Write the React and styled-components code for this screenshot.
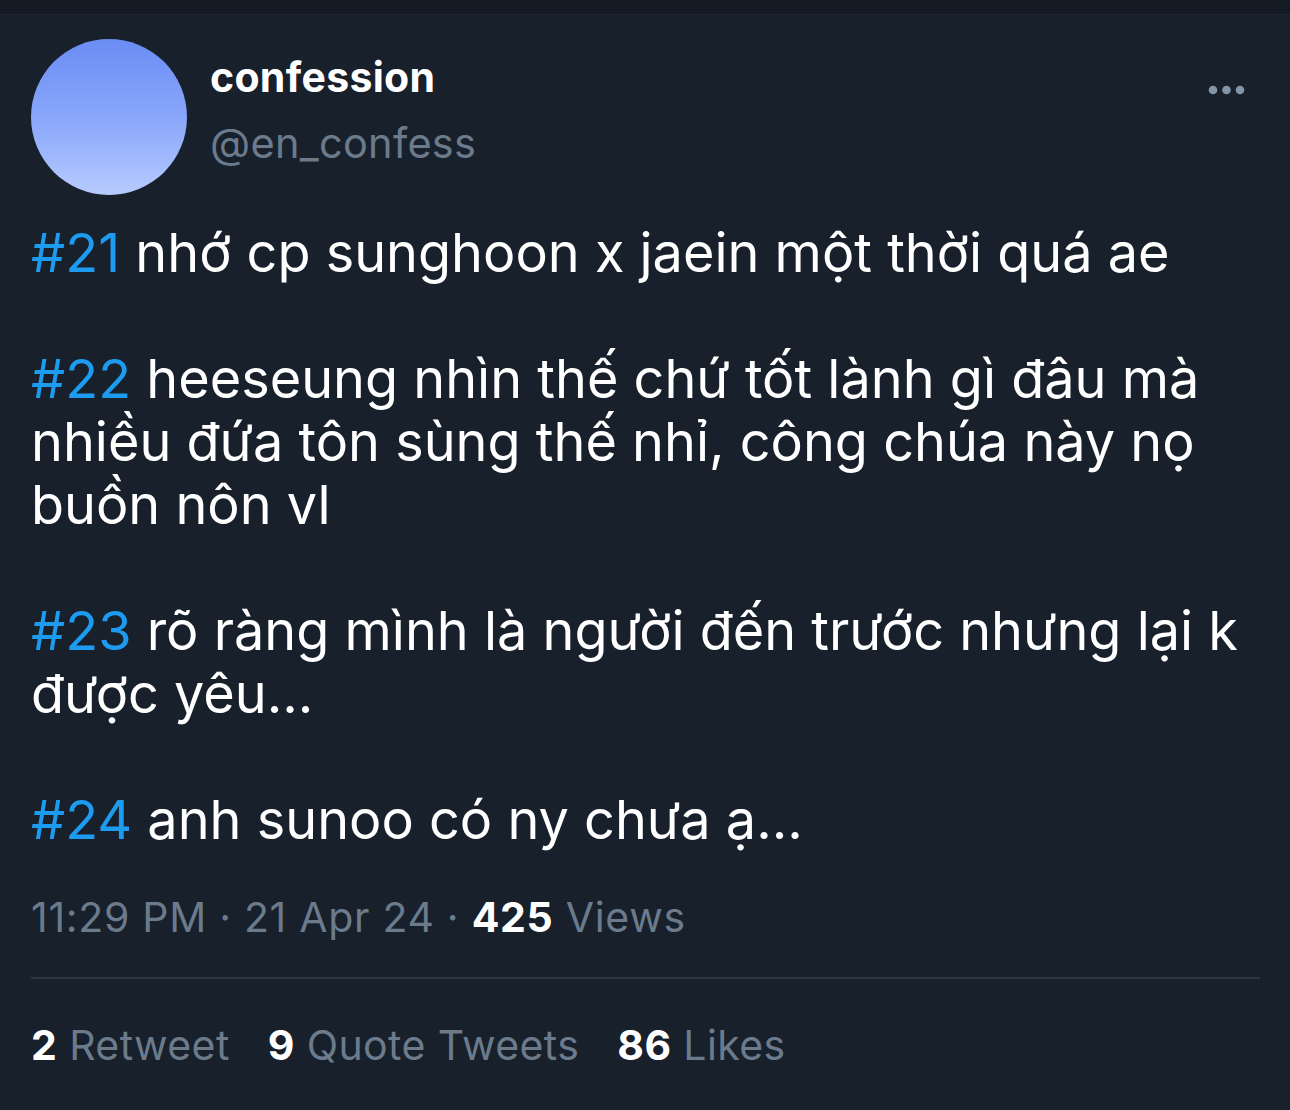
import React from "react";
import styled, { createGlobalStyle } from "styled-components";

const GlobalStyle = createGlobalStyle`
  html, body {
    margin: 0;
    padding: 0;
    background: #17202b;
  }
  body {
    font-family: Inter, "Noto Sans", "Liberation Sans", sans-serif;
    -webkit-font-smoothing: antialiased;
  }
`;

const paragraphs = [
  { tag: "#21", text: "nhớ cp sunghoon x jaein một thời quá ae" },
  { tag: "#22", text: "heeseung nhìn thế chứ tốt lành gì đâu mà nhiều đứa tôn sùng thế nhỉ, công chúa này nọ buồn nôn vl" },
  { tag: "#23", text: "rõ ràng mình là người đến trước nhưng lại k được yêu..." },
  { tag: "#24", text: "anh sunoo có ny chưa ạ..." },
];

const stats = [
  { value: "2", label: "Retweet" },
  { value: "9", label: "Quote Tweets" },
  { value: "86", label: "Likes" },
];

function App() {
  return (
    <>
      <GlobalStyle />
      <Page>
        <TopStrip />
        <Tweet>
          <Header>
            <Avatar />
            <Names>
              <DisplayName>confession</DisplayName>
              <Handle>@en_confess</Handle>
            </Names>
            <MoreButton aria-label="More">
              <svg width="38" height="10" viewBox="0 0 38 10">
                <circle cx="5" cy="5" r="4.3" fill="#8395a8" />
                <circle cx="18.5" cy="5" r="4.3" fill="#8395a8" />
                <circle cx="32" cy="5" r="4.3" fill="#8395a8" />
              </svg>
            </MoreButton>
          </Header>

          <Body>
            {paragraphs.map((p) => (
              <Paragraph key={p.tag}>
                <Hashtag>{p.tag}</Hashtag> {p.text}
              </Paragraph>
            ))}
          </Body>

          <Meta>
            11:29 PM · 21 Apr 24 · <Strong>425</Strong> Views
          </Meta>

          <Divider />

          <Stats>
            {stats.map((s) => (
              <Stat key={s.label}>
                <Strong>{s.value}</Strong> {s.label}
              </Stat>
            ))}
          </Stats>
        </Tweet>
      </Page>
    </>
  );
}

const Page = styled.div`
  width: 1290px;
  height: 1110px;
  background: #17202b;
  overflow: hidden;
`;

const TopStrip = styled.div`
  height: 14px;
  background: #131a23;
  border-bottom: 1px solid #1d2631;
`;

const Tweet = styled.article`
  padding: 24px 31px 0 31px;
`;

const Header = styled.header`
  display: flex;
  align-items: flex-start;
`;

const Avatar = styled.div`
  width: 156px;
  height: 156px;
  border-radius: 50%;
  flex-shrink: 0;
  background: linear-gradient(180deg, #6a8df4 0%, #88a6fa 50%, #b8cbfe 100%);
`;

const Names = styled.div`
  display: flex;
  flex-direction: column;
  margin-left: 23px;
  padding-top: 11px;
  flex: 1;
`;

const DisplayName = styled.div`
  color: #ffffff;
  font-weight: 700;
  font-size: 41px;
  line-height: 54px;
  letter-spacing: 0.3px;
`;

const Handle = styled.div`
  color: #6b7b8c;
  font-size: 41.5px;
  line-height: 54px;
  letter-spacing: 0.3px;
  margin-top: 12px;
`;

const MoreButton = styled.div`
  display: flex;
  align-items: center;
  justify-content: center;
  margin-top: 46px;
  margin-right: 13px;
`;

const Body = styled.div`
  margin-top: 26px;
  color: #ffffff;
  font-size: 54px;
  line-height: 63px;
`;

const Paragraph = styled.p`
  margin: 0 0 63px 0;
  &:last-child {
    margin-bottom: 0;
  }
`;

const Hashtag = styled.span`
  color: #1d9bf0;
`;

const Meta = styled.div`
  margin-top: 42px;
  color: #6b7b8c;
  font-size: 41px;
  line-height: 48px;
  letter-spacing: 0.7px;
`;

const Strong = styled.span`
  color: #ffffff;
  font-weight: 700;
`;

const Divider = styled.hr`
  border: none;
  height: 2px;
  background: #2c3641;
  margin: 36px -1px 0 0;
`;

const Stats = styled.div`
  display: flex;
  gap: 38px;
  margin-top: 42px;
  color: #6b7b8c;
  font-size: 41px;
  line-height: 48px;
  letter-spacing: 0.4px;
`;

const Stat = styled.span``;

export default App;
